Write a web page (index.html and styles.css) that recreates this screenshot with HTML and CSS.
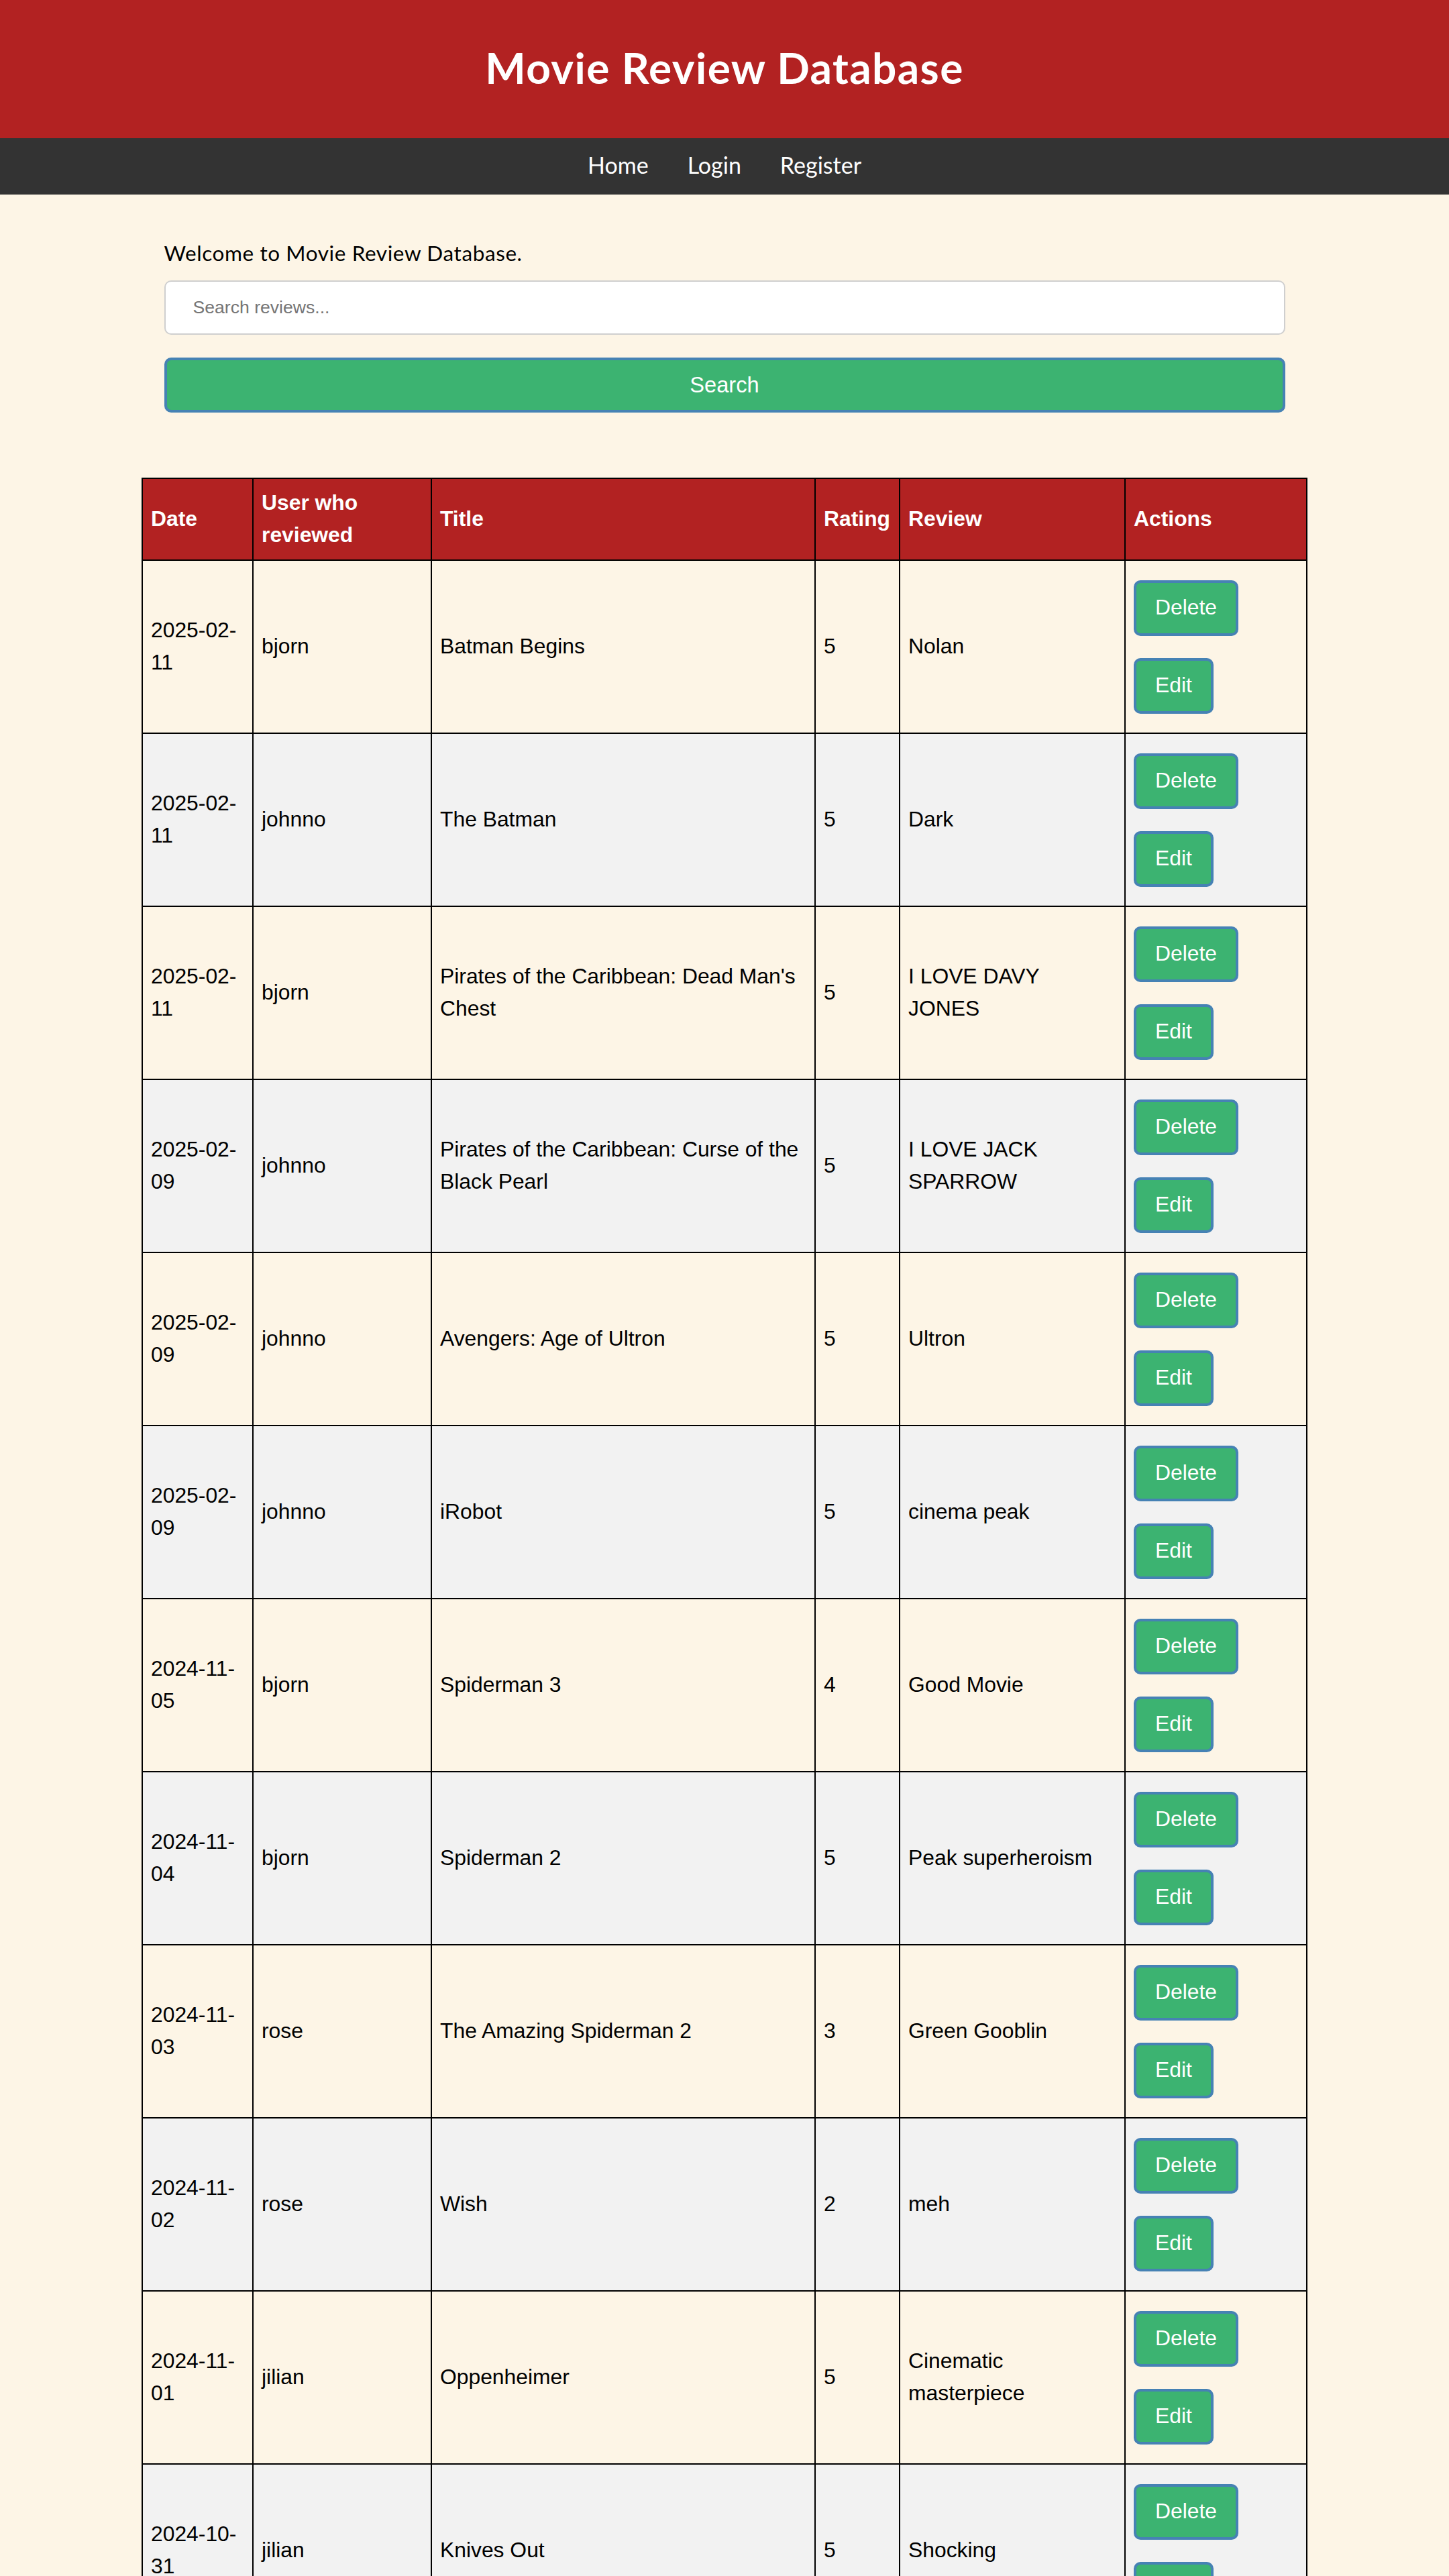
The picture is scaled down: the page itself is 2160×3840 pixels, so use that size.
FILE: index.html
```html
<!DOCTYPE html>
<html lang="en">
<head>
<meta charset="utf-8">
<title>Movie Review Database</title>
<link rel="stylesheet" href="styles.css">
</head>
<body>
<header class="site-header">
  <h1 class="site-title">Movie Review Database</h1>
</header>
<nav class="site-nav">
  <a class="nav-link" href="#">Home</a>
  <a class="nav-link" href="#">Login</a>
  <a class="nav-link" href="#">Register</a>
</nav>
<main class="content">
  <p class="welcome">Welcome to Movie Review Database.</p>
  <form class="search-form">
    <input class="search-input" type="text" placeholder="Search reviews...">
    <button class="search-button" type="button">Search</button>
  </form>
</main>
<section class="table-wrap">
  <table class="reviews">
    <colgroup>
      <col class="col-date">
      <col class="col-user">
      <col class="col-title">
      <col class="col-rating">
      <col class="col-review">
      <col class="col-actions">
    </colgroup>
    <thead>
      <tr>
        <th>Date</th>
        <th>User who reviewed</th>
        <th>Title</th>
        <th>Rating</th>
        <th>Review</th>
        <th>Actions</th>
      </tr>
    </thead>
    <tbody>
      <tr>
        <td>2025-02-11</td><td>bjorn</td><td>Batman Begins</td><td>5</td><td>Nolan</td>
        <td class="actions"><div class="action-stack"><button class="btn" type="button">Delete</button><button class="btn" type="button">Edit</button></div></td>
      </tr>
      <tr>
        <td>2025-02-11</td><td>johnno</td><td>The Batman</td><td>5</td><td>Dark</td>
        <td class="actions"><div class="action-stack"><button class="btn" type="button">Delete</button><button class="btn" type="button">Edit</button></div></td>
      </tr>
      <tr>
        <td>2025-02-11</td><td>bjorn</td><td>Pirates of the Caribbean: Dead Man's Chest</td><td>5</td><td>I LOVE DAVY JONES</td>
        <td class="actions"><div class="action-stack"><button class="btn" type="button">Delete</button><button class="btn" type="button">Edit</button></div></td>
      </tr>
      <tr>
        <td>2025-02-09</td><td>johnno</td><td>Pirates of the Caribbean: Curse of the Black Pearl</td><td>5</td><td>I LOVE JACK SPARROW</td>
        <td class="actions"><div class="action-stack"><button class="btn" type="button">Delete</button><button class="btn" type="button">Edit</button></div></td>
      </tr>
      <tr>
        <td>2025-02-09</td><td>johnno</td><td>Avengers: Age of Ultron</td><td>5</td><td>Ultron</td>
        <td class="actions"><div class="action-stack"><button class="btn" type="button">Delete</button><button class="btn" type="button">Edit</button></div></td>
      </tr>
      <tr>
        <td>2025-02-09</td><td>johnno</td><td>iRobot</td><td>5</td><td>cinema peak</td>
        <td class="actions"><div class="action-stack"><button class="btn" type="button">Delete</button><button class="btn" type="button">Edit</button></div></td>
      </tr>
      <tr>
        <td>2024-11-05</td><td>bjorn</td><td>Spiderman 3</td><td>4</td><td>Good Movie</td>
        <td class="actions"><div class="action-stack"><button class="btn" type="button">Delete</button><button class="btn" type="button">Edit</button></div></td>
      </tr>
      <tr>
        <td>2024-11-04</td><td>bjorn</td><td>Spiderman 2</td><td>5</td><td>Peak superheroism</td>
        <td class="actions"><div class="action-stack"><button class="btn" type="button">Delete</button><button class="btn" type="button">Edit</button></div></td>
      </tr>
      <tr>
        <td>2024-11-03</td><td>rose</td><td>The Amazing Spiderman 2</td><td>3</td><td>Green Gooblin</td>
        <td class="actions"><div class="action-stack"><button class="btn" type="button">Delete</button><button class="btn" type="button">Edit</button></div></td>
      </tr>
      <tr>
        <td>2024-11-02</td><td>rose</td><td>Wish</td><td>2</td><td>meh</td>
        <td class="actions"><div class="action-stack"><button class="btn" type="button">Delete</button><button class="btn" type="button">Edit</button></div></td>
      </tr>
      <tr>
        <td>2024-11-01</td><td>jilian</td><td>Oppenheimer</td><td>5</td><td>Cinematic masterpiece</td>
        <td class="actions"><div class="action-stack"><button class="btn" type="button">Delete</button><button class="btn" type="button">Edit</button></div></td>
      </tr>
      <tr>
        <td>2024-10-31</td><td>jilian</td><td>Knives Out</td><td>5</td><td>Shocking</td>
        <td class="actions"><div class="action-stack"><button class="btn" type="button">Delete</button><button class="btn" type="button">Edit</button></div></td>
      </tr>
    </tbody>
  </table>
</section>
</body>
</html>
```
FILE: styles.css
```css
* {
  box-sizing: border-box;
}

html, body {
  margin: 0;
  padding: 0;
}

body {
  background: #fdf5e6;
  font-family: "Liberation Sans", Arial, sans-serif;
  color: #000;
}

.site-header {
  background: #b22222;
  height: 206px;
  display: flex;
  align-items: center;
  justify-content: center;
  padding-bottom: 4px;
}

.site-title {
  margin: 0;
  color: #fff;
  font-family: Lato, "Open Sans", sans-serif;
  font-weight: 700;
  font-size: 64px;
  letter-spacing: 1.4px;
  line-height: 1;
}

.site-nav {
  background: #333;
  height: 84px;
  display: flex;
  align-items: center;
  justify-content: center;
  gap: 58px;
  padding-bottom: 4px;
}

.nav-link {
  color: #fff;
  text-decoration: none;
  font-family: Lato, "Open Sans", sans-serif;
  font-size: 34px;
  line-height: 1;
}

.content {
  width: 1671px;
  margin: 0 auto;
  padding-top: 64px;
}

.welcome {
  margin: 0 0 17px 0;
  font-family: Lato, "Open Sans", sans-serif;
  font-size: 31.5px;
  letter-spacing: 0.6px;
  line-height: 47px;
  color: #000;
}

.search-form {
  display: flex;
  flex-direction: column;
  gap: 34px;
}

.search-input {
  display: block;
  width: 100%;
  height: 81px;
  margin: 0;
  padding: 0 41px;
  border: 2px solid #cfcfcf;
  border-radius: 10px;
  background: #fff;
  font-family: "Liberation Sans", Arial, sans-serif;
  font-size: 26.6px;
  color: #000;
}

.search-input::placeholder {
  color: #757575;
}

.search-button {
  display: block;
  width: 100%;
  height: 82px;
  margin: 0;
  border: 4px solid #4682b4;
  border-radius: 10px;
  background: #3cb371;
  color: #fff;
  font-family: "Liberation Sans", Arial, sans-serif;
  font-size: 32.65px;
}

.table-wrap {
  padding-top: 97px;
  display: flex;
  justify-content: center;
}

.reviews {
  width: 1736px;
  table-layout: fixed;
  border-collapse: collapse;
  font-size: 31.84px;
  line-height: 47.75px;
}

.col-date { width: 165px; }
.col-user { width: 266px; }
.col-title { width: 572px; }
.col-rating { width: 126px; }
.col-review { width: 336px; }
.col-actions { width: 271px; }

.reviews th,
.reviews td {
  border: 2px solid #000;
  padding: 13px 12px;
  text-align: left;
  vertical-align: middle;
}

.reviews th {
  padding-top: 12px;
  padding-bottom: 12px;
  background: #b22222;
  color: #fff;
  font-weight: 700;
}

.reviews tbody tr:nth-child(even) td {
  background: #f2f2f2;
}

.reviews td.actions {
  padding: 29px 12px 28px;
}

.action-stack {
  display: flex;
  flex-direction: column;
  align-items: flex-start;
  gap: 33px;
}

.btn {
  height: 83px;
  margin: 0;
  padding: 0 28px;
  border: 4px solid #4682b4;
  border-radius: 10px;
  background: #3cb371;
  color: #fff;
  font-family: "Liberation Sans", Arial, sans-serif;
  font-size: 31.84px;
  line-height: 1;
}
```
